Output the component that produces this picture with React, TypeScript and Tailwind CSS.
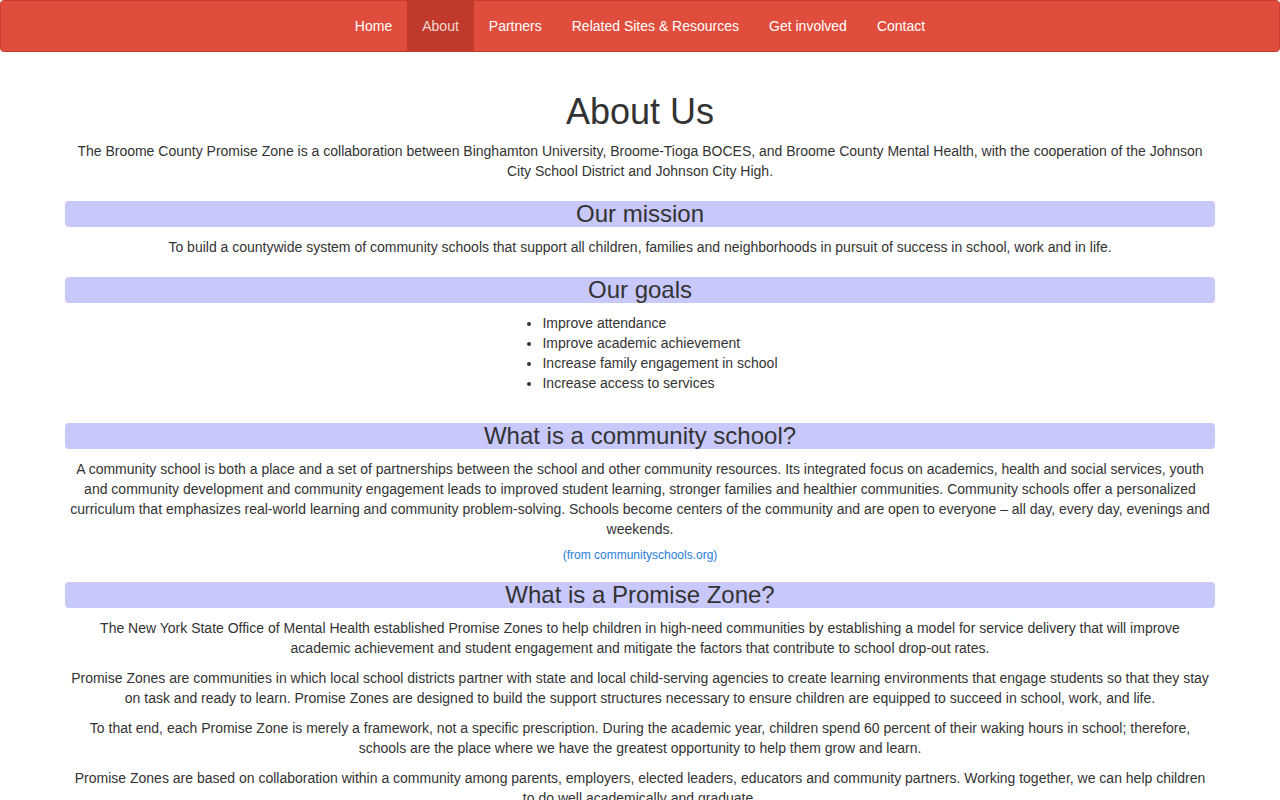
const navItems = ["Home", "About", "Partners", "Related Sites & Resources", "Get involved", "Contact"]

const goals = [
  "Improve attendance",
  "Improve academic achievement",
  "Increase family engagement in school",
  "Increase access to services",
]

function Band({ children }: { children: React.ReactNode }) {
  return (
    <h2 className="-mx-[5px] rounded-[4px] bg-[#c8c8fb] text-center text-[24px] font-medium leading-[26px] text-[#333]">
      {children}
    </h2>
  )
}

export default function App() {
  return (
    <div className="min-h-[800px] bg-white font-['Liberation_Sans',Arial,sans-serif] text-[14px] leading-[20px] text-[#333]">
      <nav className="flex h-[52px] justify-center rounded-[4px] border border-[#c63d2f] bg-[#e14d3d]">
        <ul className="flex">
          {navItems.map((item) => (
            <li key={item}>
              <a
                href="#"
                className={
                  "block px-[15px] leading-[50px] " +
                  (item === "About" ? "bg-[#c0392b] text-[#f2d7d3]" : "text-white")
                }
              >
                {item}
              </a>
            </li>
          ))}
        </ul>
      </nav>

      <main className="mx-auto w-[1170px] px-[15px] pt-[40px] text-center">
        <h1 className="text-[36px] font-medium leading-[39px]">About Us</h1>
        <p className="mt-[10px]">
          The Broome County Promise Zone is a collaboration between Binghamton University, Broome-Tioga BOCES, and
          Broome County Mental Health, with the cooperation of the Johnson City School District and Johnson City High.
        </p>

        <div className="mt-[20px]">
          <Band>Our mission</Band>
        </div>
        <p className="mt-[10px]">
          To build a countywide system of community schools that support all children, families and neighborhoods in
          pursuit of success in school, work and in life.
        </p>

        <div className="mt-[20px]">
          <Band>Our goals</Band>
        </div>
        <ul className="mt-[10px] inline-block list-disc pl-[40px] text-left">
          {goals.map((g) => (
            <li key={g}>{g}</li>
          ))}
        </ul>

        <div className="mt-[30px]">
          <Band>What is a community school?</Band>
        </div>
        <p className="mt-[10px]">
          A community school is both a place and a set of partnerships between the school and other community
          resources. Its integrated focus on academics, health and social services, youth and community development
          and community engagement leads to improved student learning, stronger families and healthier communities.
          Community schools offer a personalized curriculum that emphasizes real-world learning and community
          problem-solving. Schools become centers of the community and are open to everyone – all day, every day,
          evenings and weekends.
        </p>
        <p className="mt-[6px] text-[12px]">
          <a href="#" className="text-[#2a7ed8]">
            (from communityschools.org)
          </a>
        </p>

        <div className="mt-[17px]">
          <Band>What is a Promise Zone?</Band>
        </div>
        <p className="mt-[10px]">
          The New York State Office of Mental Health established Promise Zones to help children in high-need
          communities by establishing a model for service delivery that will improve academic achievement and student
          engagement and mitigate the factors that contribute to school drop-out rates.
        </p>
        <p className="mt-[10px]">
          Promise Zones are communities in which local school districts partner with state and local child-serving
          agencies to create learning environments that engage students so that they stay on task and ready to learn.
          Promise Zones are designed to build the support structures necessary to ensure children are equipped to
          succeed in school, work, and life.
        </p>
        <p className="mt-[10px]">
          To that end, each Promise Zone is merely a framework, not a specific prescription. During the academic year,
          children spend 60 percent of their waking hours in school; therefore, schools are the place where we have
          the greatest opportunity to help them grow and learn.
        </p>
        <p className="mt-[10px] pb-[10px]">
          Promise Zones are based on collaboration within a community among parents, employers, elected leaders,
          educators and community partners. Working together, we can help children to do well academically and
          graduate.
        </p>
      </main>
    </div>
  )
}
